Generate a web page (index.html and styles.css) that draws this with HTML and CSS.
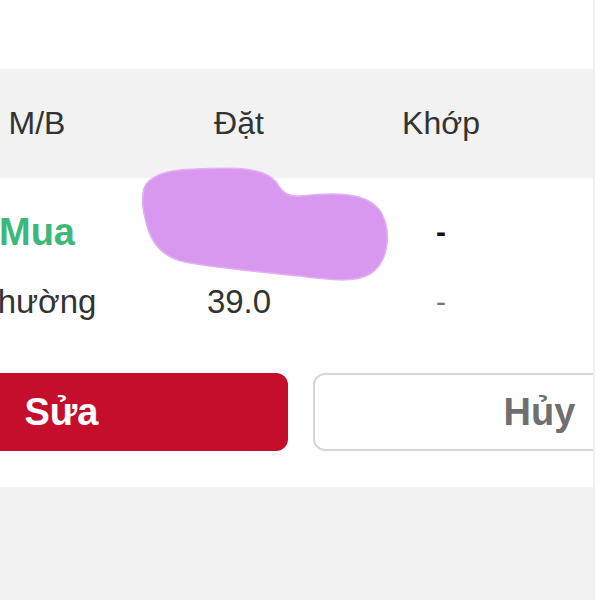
FILE: index.html
```html
<!DOCTYPE html>
<html lang="vi">

<head>
    <meta charset="UTF-8">
    <meta name="viewport" content="width=device-width, initial-scale=1.0">
    <title>Lệnh đặt</title>
    <link rel="stylesheet" href="styles.css">
</head>

<body>
    <div class="screen">
        <div class="table-head">
            <div class="cell">M/B</div>
            <div class="cell">Đặt</div>
            <div class="cell">Khớp</div>
            <div class="cell"></div>
        </div>

        <div class="table-body">
            <div class="row row-main">
                <div class="cell side-buy">Mua</div>
                <div class="cell"></div>
                <div class="cell dash-strong">-</div>
                <div class="cell"></div>
            </div>
            <div class="row row-sub">
                <div class="cell">Thường</div>
                <div class="cell">39.0</div>
                <div class="cell dash-light">-</div>
                <div class="cell"></div>
            </div>
        </div>

        <div class="actions">
            <button class="btn btn-edit">Sửa</button>
            <button class="btn btn-cancel">Hủy</button>
        </div>

        <div class="footer"></div>

        <!-- vùng bị che -->
        <svg class="scribble" viewBox="142 166 248 118" width="248" height="118">
            <path d="M 143 196 C 142 180, 158 170, 195 169 C 235 167, 265 167, 277 183 C 282 192, 288 197, 300 196 C 335 192, 368 192, 381 212 C 392 232, 389 262, 370 274 C 355 283, 330 280, 300 276 C 262 272, 215 268, 185 262 C 160 257, 150 240, 146 222 C 143 212, 142 204, 143 196 Z" fill="#d898ef" stroke="#e2b0f3" stroke-width="1.5"/>
        </svg>
    </div>
</body>

</html>
```

FILE: styles.css
```css
body {
    margin: 0;
    background-color: #ffffff;
    font-family: 'Liberation Sans', Arial, sans-serif;
    color: #333333;
}

.screen {
    position: relative;
    width: 595px;
    height: 600px;
    overflow: hidden;
    padding-top: 69px;
    box-sizing: border-box;
    border-right: 2px solid #f0f0f0;
}

.table-head,
.row {
    display: grid;
    grid-template-columns: repeat(4, 202px);
    margin-left: -64px;
}

.cell {
    text-align: center;
    white-space: nowrap;
}

.table-head {
    background-color: #f2f2f2;
    height: 109px;
    line-height: 109px;
    font-size: 32px;
}

.table-body {
    padding-top: 32px;
}

.row-main {
    line-height: 44px;
    font-size: 38px;
    font-weight: bold;
}

.row-sub {
    margin-top: 28px;
    line-height: 40px;
    font-size: 33px;
}

.side-buy {
    color: #3db87b;
}

.dash-strong {
    color: #111111;
    font-size: 30px;
}

.dash-light {
    color: #777777;
    font-size: 30px;
}

.actions {
    display: grid;
    grid-template-columns: 453px 453px;
    gap: 25px;
    margin-left: -165px;
    margin-top: 51px;
}

.btn {
    height: 78px;
    border-radius: 12px;
    font-family: 'Liberation Sans', Arial, sans-serif;
    font-size: 38px;
    font-weight: bold;
    cursor: pointer;
}

.btn-edit {
    background-color: #c50d2c;
    color: #ffffff;
    border: none;
}

.btn-cancel {
    background-color: #ffffff;
    color: #6f6f6f;
    border: 2px solid #d6d6d6;
}

.footer {
    margin-top: 36px;
    height: 120px;
    background-color: #f2f2f2;
}

.scribble {
    position: absolute;
    left: 142px;
    top: 166px;
}
```
